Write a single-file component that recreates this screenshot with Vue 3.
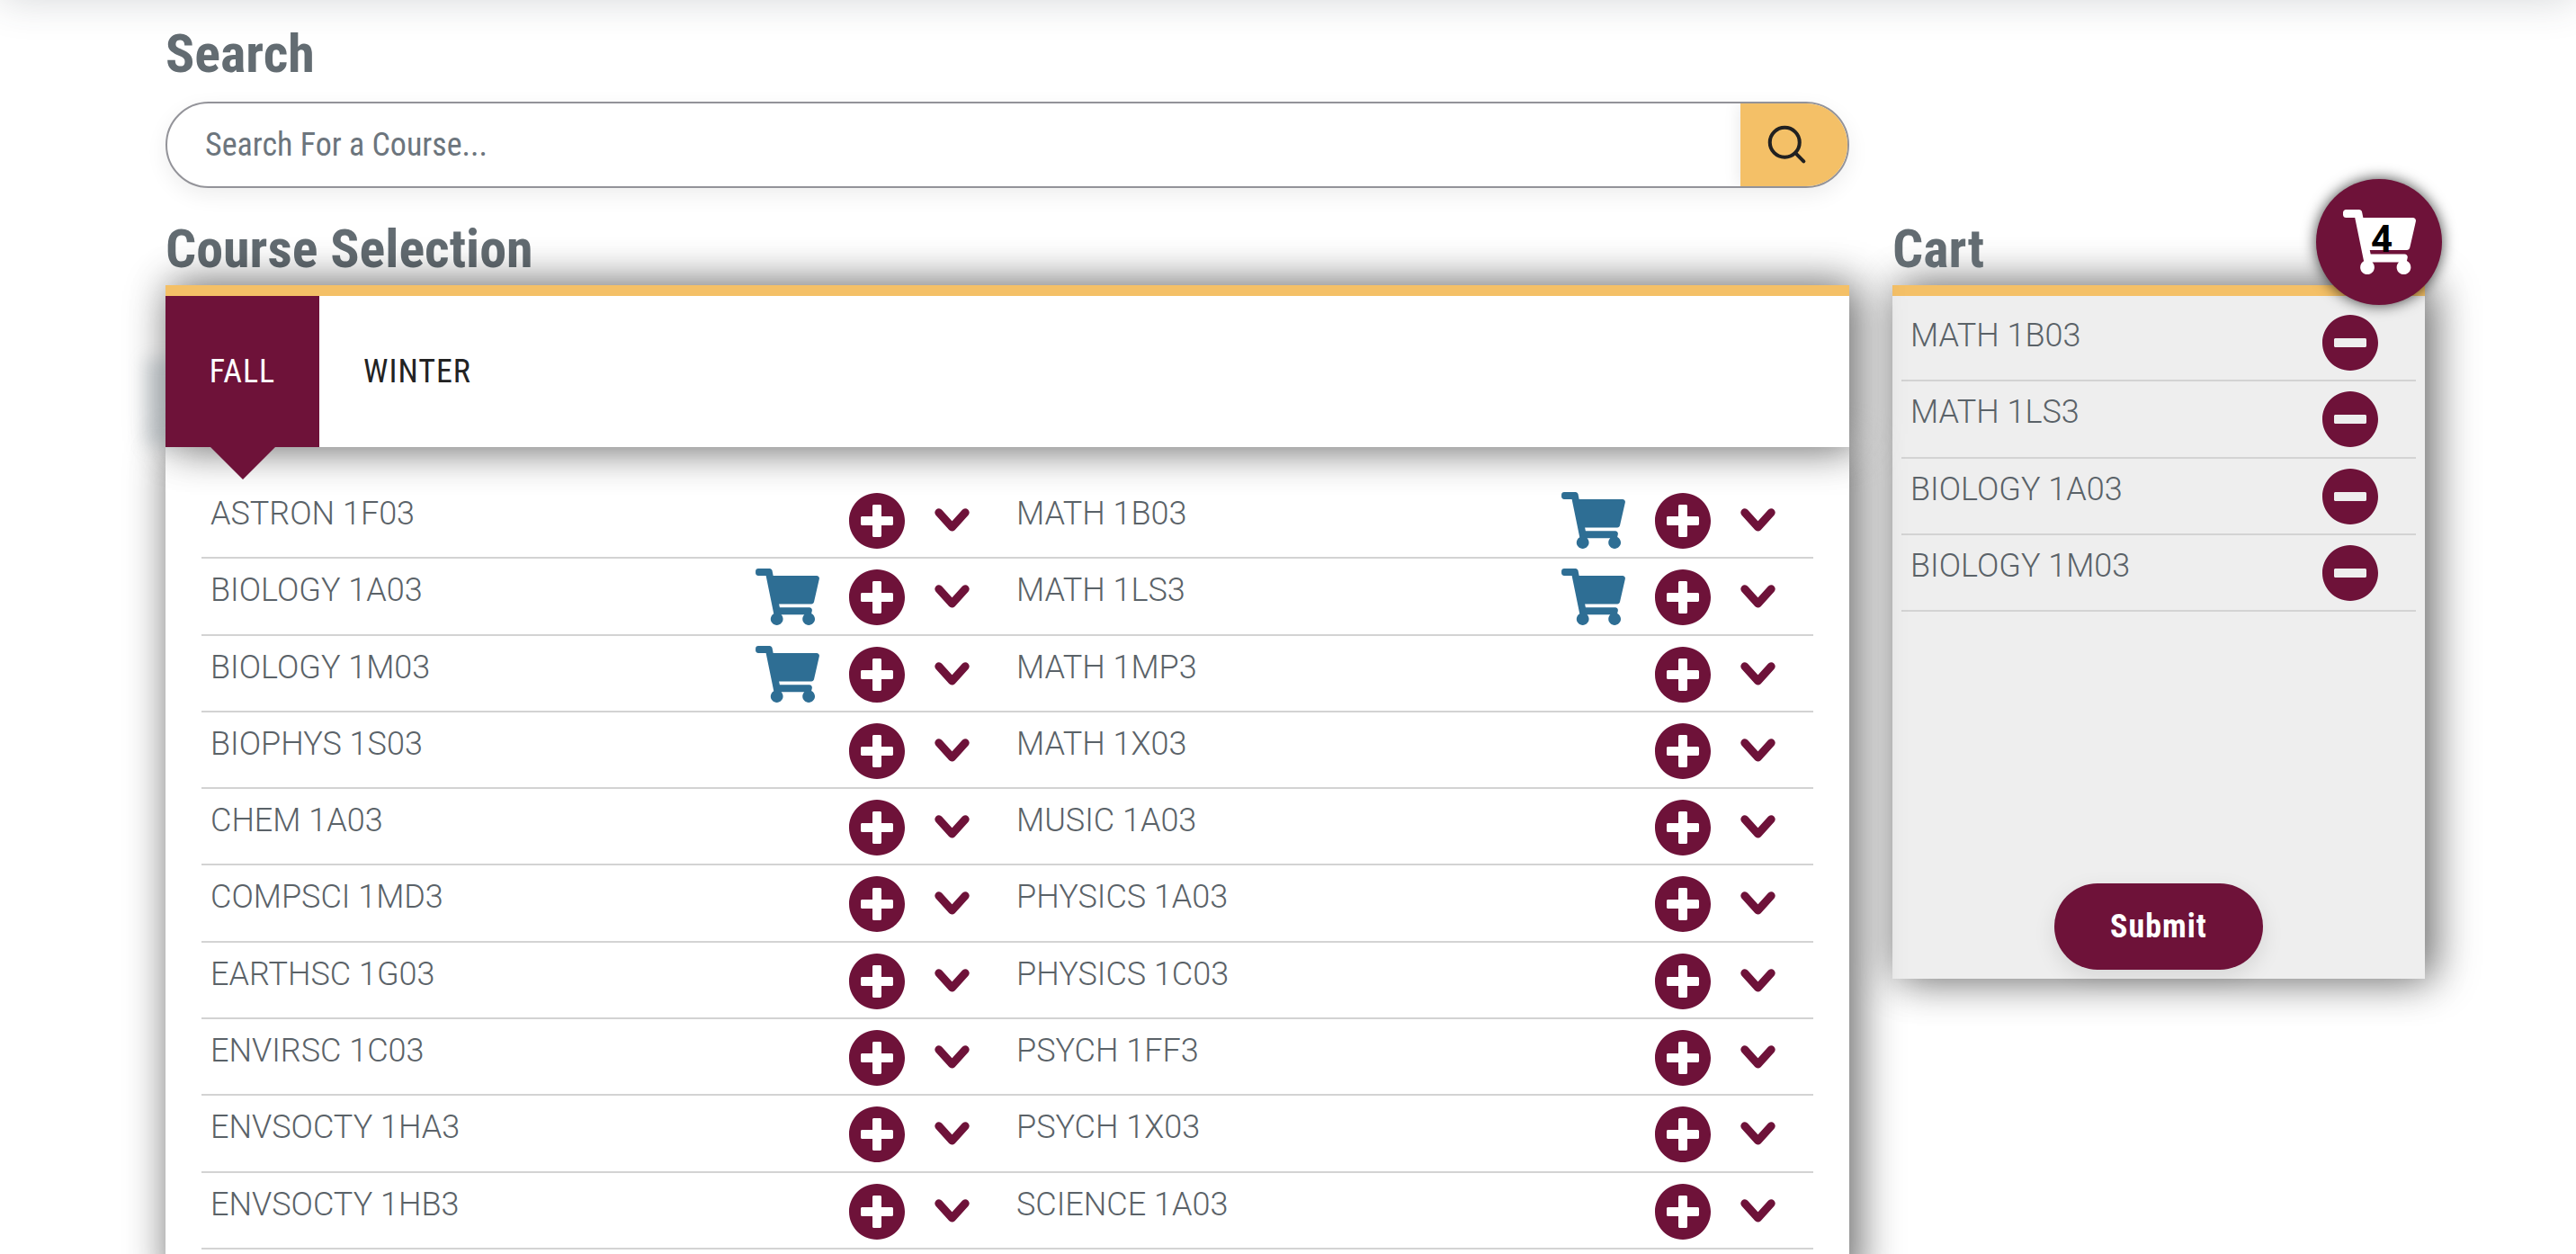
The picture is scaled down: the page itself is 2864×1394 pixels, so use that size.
<script setup>
const left = [
  ['ASTRON 1F03', false], ['BIOLOGY 1A03', true], ['BIOLOGY 1M03', true], ['BIOPHYS 1S03', false],
  ['CHEM 1A03', false], ['COMPSCI 1MD3', false], ['EARTHSC 1G03', false], ['ENVIRSC 1C03', false],
  ['ENVSOCTY 1HA3', false], ['ENVSOCTY 1HB3', false]
]
const right = [
  ['MATH 1B03', true], ['MATH 1LS3', true], ['MATH 1MP3', false], ['MATH 1X03', false],
  ['MUSIC 1A03', false], ['PHYSICS 1A03', false], ['PHYSICS 1C03', false], ['PSYCH 1FF3', false],
  ['PSYCH 1X03', false], ['SCIENCE 1A03', false]
]
const courses = left.flatMap((c, i) => [c, right[i]]).map(([name, inCart]) => ({ name, inCart }))
const cart = ['MATH 1B03', 'MATH 1LS3', 'BIOLOGY 1A03', 'BIOLOGY 1M03']
const cartPath = 'M528.12 301.319l47.273-208C578.806 78.301 567.391 64 551.99 64H159.208l-9.166-44.81C147.758 8.021 137.93 0 126.529 0H24C10.745 0 0 10.745 0 24v16c0 13.255 10.745 24 24 24h69.883l70.248 343.435C147.325 417.1 136 435.222 136 456c0 30.928 25.072 56 56 56s56-25.072 56-56c0-15.674-6.447-29.835-16.824-40h209.647C430.447 426.165 424 440.326 424 456c0 30.928 25.072 56 56 56s56-25.072 56-56c0-22.172-12.888-41.332-31.579-50.405l5.517-24.276c3.413-15.018-8.002-29.319-23.403-29.319H218.117l-6.545-32h293.145c11.206 0 20.92-7.754 23.403-18.681z'
const plusPath = 'M256 8C119 8 8 119 8 256s111 248 248 248 248-111 248-248S393 8 256 8zm144 276c0 6.6-5.4 12-12 12h-92v92c0 6.6-5.4 12-12 12h-56c-6.6 0-12-5.4-12-12v-92h-92c-6.6 0-12-5.4-12-12v-56c0-6.6 5.4-12 12-12h92v-92c0-6.6 5.4-12 12-12h56c6.6 0 12 5.4 12 12v92h92c6.6 0 12 5.4 12 12v56z'
const minusPath = 'M256 8C119 8 8 119 8 256s111 248 248 248 248-111 248-248S393 8 256 8zM124 296c-6.6 0-12-5.4-12-12v-56c0-6.6 5.4-12 12-12h264c6.6 0 12 5.4 12 12v56c0 6.6-5.4 12-12 12H124z'
</script>

<template>
  <div class="page">
    <div class="topbar"></div>
    <main class="layout">
      <section class="search">
        <h2 class="heading search-heading">Search</h2>
        <div class="searchbox">
          <div class="field">Search For a Course...</div>
          <button class="go" type="button" aria-label="Search">
            <svg viewBox="0 0 48 48" class="glass">
              <circle cx="21" cy="21" r="18" fill="none" stroke="#212121" stroke-width="4.4" />
              <line x1="34" y1="34" x2="44" y2="44" stroke="#212121" stroke-width="4.4" stroke-linecap="round" />
            </svg>
          </button>
        </div>
      </section>

      <div class="columns">
        <section class="main-col">
          <h2 class="heading">Course Selection</h2>
          <div class="tabs">
            <div class="tab active">FALL</div>
            <div class="tab">WINTER</div>
          </div>
          <div class="list">
            <div v-for="c in courses" :key="c.name" class="row">
              <span class="name">{{ c.name }}</span>
              <svg v-if="c.inCart" class="incart" viewBox="0 0 576 512"><path :d="cartPath" /></svg>
              <svg class="circle" viewBox="0 0 512 512"><path :d="plusPath" /></svg>
              <svg class="chev" viewBox="0 0 39 26"><polyline points="4.8,4.8 19.5,21 34.2,4.8" /></svg>
            </div>
          </div>
        </section>

        <aside class="cart-col">
          <h2 class="heading">Cart</h2>
          <div class="cart-panel">
            <div class="cart-rows">
              <div v-for="c in cart" :key="c" class="cart-row">
                <span class="name">{{ c }}</span>
                <svg class="circle" viewBox="0 0 512 512"><path :d="minusPath" /></svg>
              </div>
            </div>
            <button class="submit" type="button">Submit</button>
          </div>
          <div class="badge">
            <svg class="badge-cart" viewBox="0 0 576 512"><path :d="cartPath" /></svg>
            <span class="count">4</span>
          </div>
        </aside>
      </div>
    </main>
  </div>
</template>

<style>
html, body { margin: 0; background: #fff; overflow: hidden; }
</style>

<style scoped>
.page {
  height: 1394px;
  overflow: hidden;
  position: relative;
  background: #fff;
  font-family: Roboto, "Liberation Sans", sans-serif;
}
.topbar {
  position: absolute;
  top: -60px;
  left: 0;
  right: 0;
  height: 60px;
  box-shadow: 0 0 46px rgba(50, 60, 70, 0.2);
}
.layout {
  padding: 0 0 0 184px;
  width: 2600px;
}
.heading {
  margin: 0;
  font-family: Roboto, "Liberation Sans", sans-serif;
  font-stretch: 75%;
  font-weight: 700;
  font-size: 60px;
  line-height: 70px;
  color: #636c72;
}
.search-heading { padding-top: 25px; }
.searchbox {
  margin-top: 18px;
  width: 1872px;
  height: 96px;
  box-sizing: border-box;
  border: 2px solid #939399;
  border-radius: 48px;
  display: flex;
  overflow: hidden;
  background: #fff;
  box-shadow: 0 8px 24px rgba(0, 0, 0, 0.07);
}
.field {
  flex: 1;
  display: flex;
  align-items: center;
  padding-left: 42px;
  font-stretch: 75%;
  font-size: 36px;
  color: #6c757d;
}
.go {
  width: 119px;
  border: 0;
  padding: 0;
  background: #f4c067;
  display: flex;
  align-items: center;
  justify-content: center;
  box-shadow: 0 0 18px rgba(0, 0, 0, 0.1);
}
.glass { width: 44px; height: 44px; margin-left: -15px; }
.columns {
  display: flex;
  gap: 48px;
  margin-top: 33px;
  align-items: flex-start;
}
.main-col { width: 1872px; }
.tabs {
  position: relative;
  z-index: 2;
  margin-top: 5px;
  height: 168px;
  display: flex;
  background: #fff;
  border-top: 12px solid #f4c067;
  box-shadow: 12px 0 44px rgba(0, 0, 0, 0.42), 0 0 44px rgba(0, 0, 0, 0.3);
}
.tabs::before {
  content: "";
  position: absolute;
  left: -22px;
  width: 34px;
  top: 70px;
  bottom: 2px;
  background: rgba(120, 135, 145, 0.3);
  filter: blur(9px);
  z-index: -1;
}
.tab {
  position: relative;
  padding: 0 48px 0 49px;
  display: flex;
  align-items: center;
  font-size: 36px;
  font-stretch: 87%;
  letter-spacing: 1px;
  color: #222;
}
.tab.active {
  width: 171px;
  box-sizing: border-box;
  justify-content: center;
  padding: 0;
  background: #6e1239;
  color: #fff;
}
.tab.active::after {
  content: "";
  position: absolute;
  top: 100%;
  left: 50%;
  margin-left: -36px;
  border-left: 36px solid transparent;
  border-right: 36px solid transparent;
  border-top: 36px solid #6e1239;
}
.list {
  position: relative;
  z-index: 1;
  background: #fff;
  padding: 39px 40px 40px;
  display: grid;
  grid-template-columns: 896px 896px;
  grid-auto-rows: 85.3px;
  box-shadow: 12px 0 44px rgba(0, 0, 0, 0.42), 0 0 44px rgba(0, 0, 0, 0.3);
}
.row {
  display: flex;
  align-items: flex-start;
  box-sizing: border-box;
  border-bottom: 2px solid #d3d3d3;
  padding: 0 42px 0 10px;
  position: relative;
}
.name {
  margin-top: 13px;
  font-size: 36px;
  font-weight: 300;
  line-height: 44px;
  color: #5a6268;
  flex: 1;
}
.incart { width: 71px; height: 63px; fill: #2e6e94; margin-top: 11px; margin-right: 32px; }
.circle { width: 64px; height: 64px; fill: #6e1239; margin-top: 11px; }
.chev {
  width: 39px;
  height: 26px;
  margin-left: 32px;
  margin-top: 29px;
  fill: none;
  stroke: #6e1239;
  stroke-width: 9;
  stroke-linecap: round;
  stroke-linejoin: round;
}
.cart-col { position: relative; width: 592px; }
.cart-panel {
  margin-top: 5px;
  height: 771px;
  box-sizing: border-box;
  background: #eee;
  border-top: 12px solid #f4c067;
  padding: 10px;
  display: flex;
  flex-direction: column;
  box-shadow: 12px 0 44px rgba(0, 0, 0, 0.42), 0 0 44px rgba(0, 0, 0, 0.3);
}
.cart-rows { flex: 1; }
.cart-row {
  height: 85.3px;
  box-sizing: border-box;
  border-bottom: 2px solid #d3d3d3;
  display: flex;
  padding: 0 41px 0 10px;
}
.cart-row .name { margin-top: 12px; }
.cart-row .circle { margin-top: 10px; }
.submit {
  align-self: center;
  width: 232px;
  height: 96px;
  border: 0;
  border-radius: 48px;
  background: #6e1239;
  color: #fff;
  font-family: Roboto, "Liberation Sans", sans-serif;
  font-stretch: 75%;
  font-weight: 700;
  font-size: 36px;
  letter-spacing: 1px;
  box-shadow: 0 8px 24px rgba(0, 0, 0, 0.1);
}
.badge {
  position: absolute;
  top: -43px;
  right: -19px;
  width: 140px;
  height: 140px;
  border-radius: 50%;
  background: #6e1239;
  box-shadow: 0 0 16px rgba(0, 0, 0, 0.75);
}
.badge-cart { position: absolute; left: 30px; top: 34px; width: 81px; height: 72px; fill: #fff; }
.count {
  position: absolute;
  left: 61px;
  top: 42px;
  font-weight: 700;
  font-size: 42px;
  line-height: 49px;
  color: #000;
}
</style>
